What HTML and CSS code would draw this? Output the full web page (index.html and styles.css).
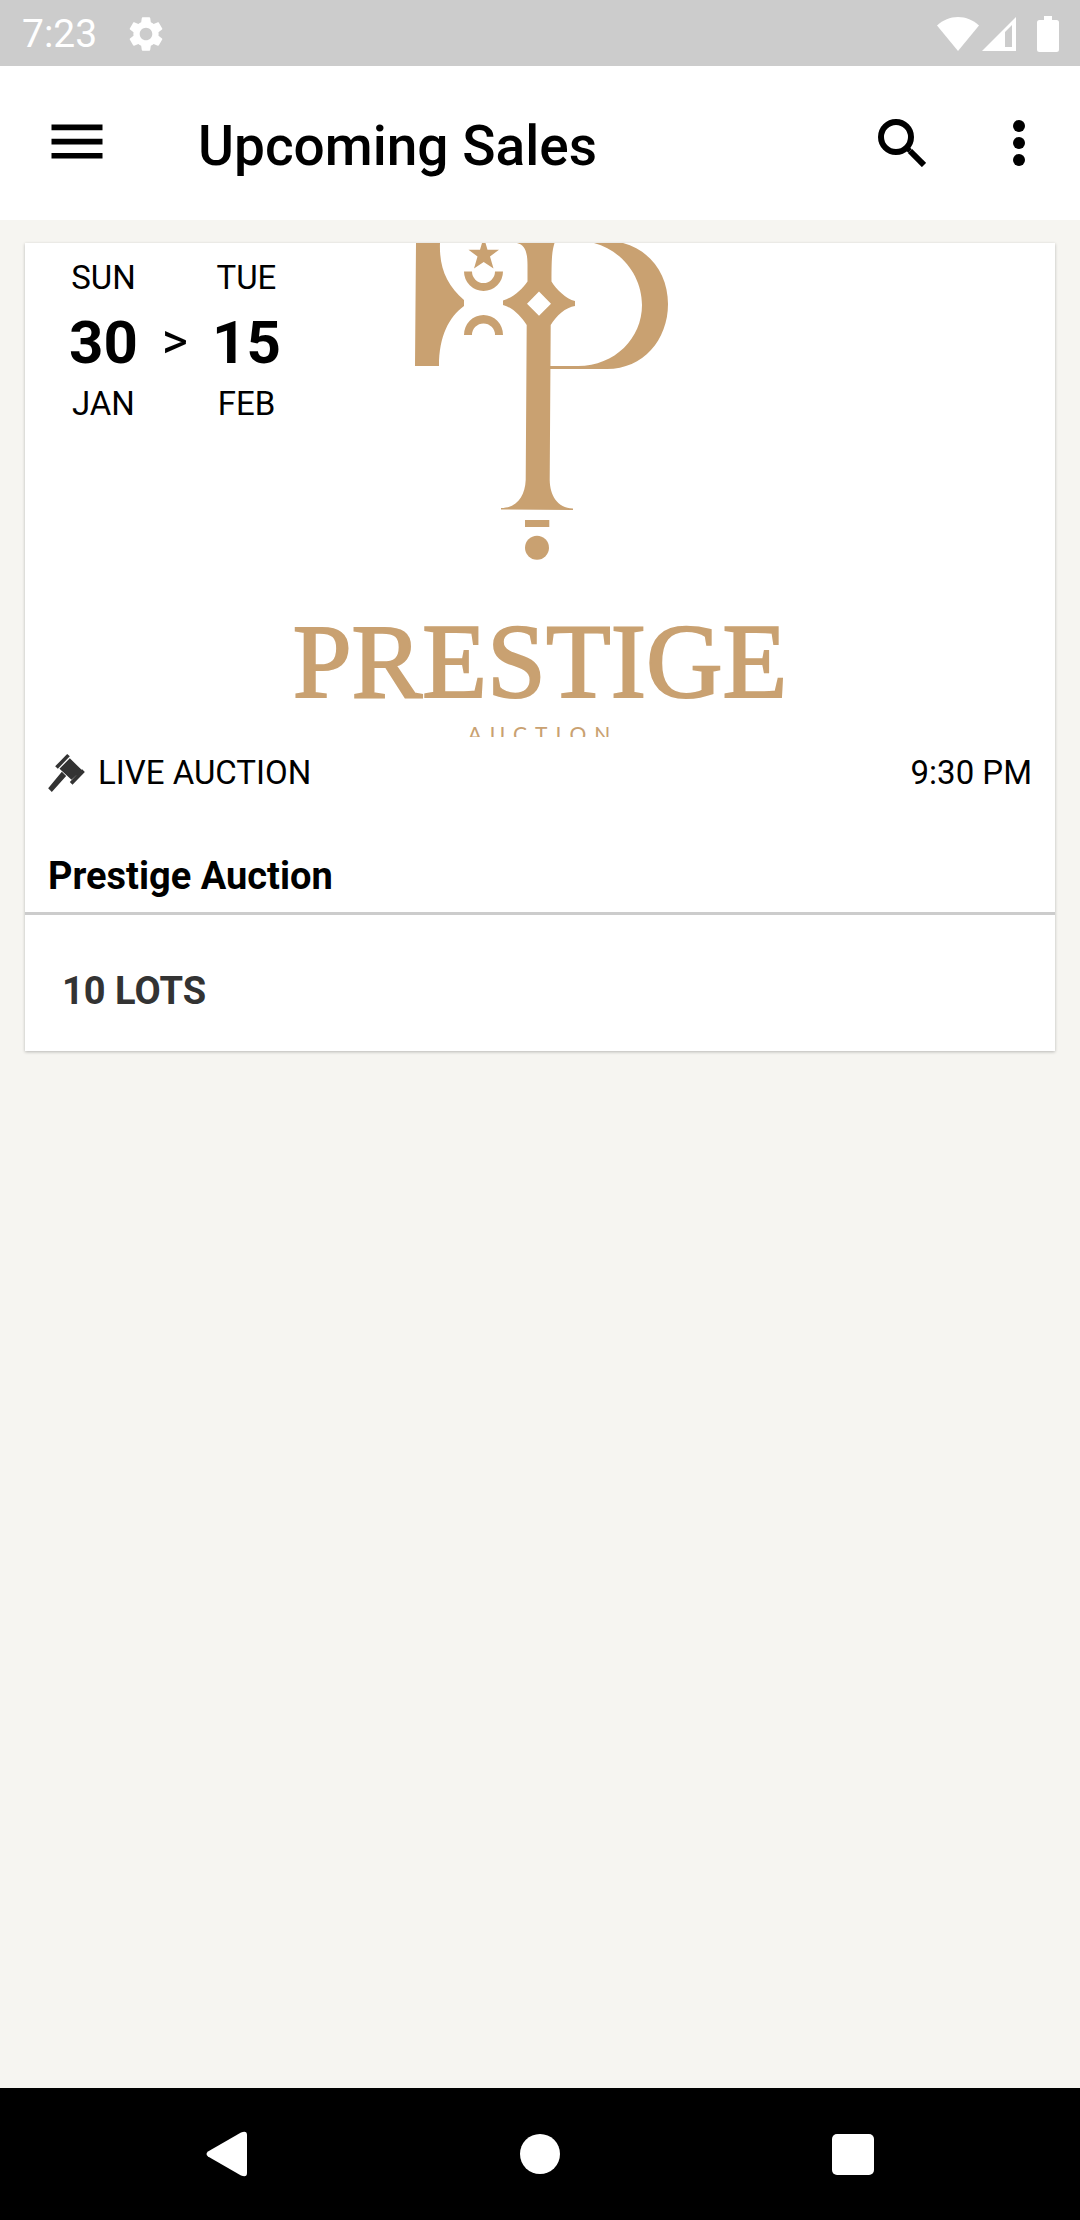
FILE: index.html
```html
<!DOCTYPE html>
<html lang="en">
<head>
  <meta charset="UTF-8">
  <meta name="viewport" content="width=device-width, initial-scale=1">
  <title>Upcoming Sales</title>
  <link rel="stylesheet" href="styles.css">
</head>
<body>
<div class="status-bar">
  <span class="clock">7:23</span>
  <svg class="gear" viewBox="0 0 24 24" aria-hidden="true">
    <path d="M19.14 12.94c.04-.3.06-.61.06-.94 0-.32-.02-.64-.07-.94l2.03-1.58c.18-.14.23-.41.12-.61l-1.92-3.32c-.12-.22-.37-.29-.59-.22l-2.39.96c-.5-.38-1.03-.7-1.62-.94l-.36-2.54c-.04-.24-.24-.41-.48-.41h-3.84c-.24 0-.43.17-.47.41l-.36 2.54c-.59.24-1.13.57-1.62.94l-2.39-.96c-.22-.08-.47 0-.59.22L2.74 8.87c-.12.21-.08.47.12.61l2.03 1.58c-.05.3-.09.63-.09.94s.02.64.07.94l-2.03 1.58c-.18.14-.23.41-.12.61l1.92 3.32c.12.22.37.29.59.22l2.39-.96c.5.38 1.03.7 1.62.94l.36 2.54c.05.24.24.41.48.41h3.84c.24 0 .44-.17.47-.41l.36-2.54c.59-.24 1.13-.56 1.62-.94l2.39.96c.22.08.47 0 .59-.22l1.92-3.32c.12-.22.07-.47-.12-.61l-2.01-1.58zM12 15.6c-1.98 0-3.6-1.62-3.6-3.6s1.62-3.6 3.6-3.6 3.6 1.62 3.6 3.6-1.62 3.6-3.6 3.6z"/>
  </svg>
  <div class="indicators">
    <svg class="wifi" viewBox="0 0 42 36" aria-hidden="true"><path d="M21 35 0 9.500C6 4 13 1 21 1s15 3 21 8.500z"/></svg>
    <svg class="signal" viewBox="0 0 36 36" aria-hidden="true"><path fill-rule="evenodd" d="M35 1v34H1zM24 16v15h7V9z"/></svg>
    <svg class="battery" viewBox="0 0 22 36" aria-hidden="true"><path d="M7 0h8v4h4.500Q22 4 22 6.500v27Q22 36 19.500 36h-17Q0 36 0 33.500v-27Q0 4 2.500 4H7z"/></svg>
  </div>
</div>

<header class="app-bar">
  <button class="icon-button" type="button" aria-label="Menu">
    <svg class="menu-icon" viewBox="0 0 24 24"><path d="M3 17.500h18v-2H3v2zm0-5h18v-2H3v2zm0-7v2h18v-2H3z"/></svg>
  </button>
  <h1 class="title">Upcoming Sales</h1>
  <button class="icon-button" type="button" aria-label="Search">
    <svg class="search-icon" viewBox="0 0 48 48" fill="none" stroke="#000" stroke-width="6">
      <circle cx="18" cy="18" r="15"/>
      <path d="M30 30l2 2" stroke-width="5"/>
      <path d="M32 32l14 14"/>
    </svg>
  </button>
  <button class="icon-button" type="button" aria-label="More options">
    <svg class="more-icon" viewBox="0 0 12 46"><circle cx="6" cy="6" r="6"/><circle cx="6" cy="23" r="6"/><circle cx="6" cy="40" r="6"/></svg>
  </button>
</header>

<main class="content">
  <article class="card">
    <div class="media">
      <svg class="logo" viewBox="0 0 1030 494" preserveAspectRatio="xMidYMid slice" role="img" aria-label="Prestige Auction">
        <path d="M391 0H415C414 25 422 42 439 57V63C424 74 414 93 414 123H390z"/>
        <path d="M457 0H460.500L462.500 6.700H474L465 13.500 468.500 25.500 458.700 19 449 25.500 452.500 13.500 443.500 6.700H455z"/>
        <path d="M439 28.500H447A11.500 11.500 0 0 0 470 28.500H478A19.500 19.500 0 0 1 439 28.500z"/>
        <path d="M439 92H447A11.500 11.500 0 0 1 470 92H478A19.500 20 0 0 0 439 92z"/>
        <path fill-rule="evenodd" d="M492 0H529.500C527 8 526.500 15 526.500 38.500 531 46 541 56 550 58V63C541 64 531 73 525.700 82L524.700 237C525 252 532 265 548 265.500V267L476 266.500V265C492 265 500 253 500.700 237L501.700 82C496 73 487 64 478 62V57.500C487 55 497 47 502.500 38.500V22C502.500 9 500 2 492 0zM514 48.500 502 60.700 514 72.700 526 60.700z"/>
        <path d="M569 0H598C627 8 643 33 643 61C643 97 618 126 582 126H525V123H553C590 123 617 95 617 62C617 34 598 8 569 0z"/>
        <path d="M500 277H524.300V284H500z"/>
        <circle cx="512" cy="304.700" r="12"/>
        <text class="logo-name" x="515" y="454">PRESTIGE</text>
        <text class="logo-sub" x="518" y="499">AUCTION</text>
      </svg>
      <div class="dates">
        <div class="date">
          <span>SUN</span>
          <strong>30</strong>
          <span>JAN</span>
        </div>
        <span class="arrow">&gt;</span>
        <div class="date">
          <span>TUE</span>
          <strong>15</strong>
          <span>FEB</span>
        </div>
      </div>
    </div>
    <div class="details">
      <div class="meta">
        <svg class="gavel" viewBox="0 0 110 114" aria-hidden="true">
          <path d="M57 0l8 7-36 37-8-7zM65 13l36 35-31 29-36-33zM102 46l8 8-37 38-8-8zM41 53l13 13-43 48-11-11z"/>
        </svg>
        <span>LIVE AUCTION</span>
        <time class="time">9:30 PM</time>
      </div>
      <h2 class="name">Prestige Auction</h2>
    </div>
    <p class="lots">10 LOTS</p>
  </article>
</main>

<nav class="nav-bar">
  <button type="button" aria-label="Back"><svg viewBox="0 0 46 46"><path d="M4 20.500 37 1.500Q43 -1 43 4V42Q43 47 37 44.500L4 25.500Q1 23 4 20.500z"/></svg></button>
  <button type="button" aria-label="Home"><svg viewBox="0 0 46 46"><circle cx="23" cy="23" r="20"/></svg></button>
  <button type="button" aria-label="Recent apps"><svg viewBox="0 0 46 46"><rect x="2" y="3" width="42" height="41" rx="5"/></svg></button>
</nav>
</body>
</html>
```

FILE: styles.css
```css
* { box-sizing: border-box; }
body { margin: 0; min-height: 100vh; display: flex; flex-direction: column; background: #f6f5f1; color: #000; font-family: Roboto, "Liberation Sans", sans-serif; font-size: 33px; line-height: 40px; }
h1, h2, p { margin: 0; }
button { padding: 0; border: none; background: none; cursor: pointer; }
svg { display: block; }

/* status bar */
.status-bar { display: flex; align-items: center; height: 66px; padding: 2px 21px 0 22px; background: #ccc; color: #fff; fill: #fff; }
.clock { font-size: 39px; }
.gear { width: 42px; height: 42px; margin-left: 28px; }
.indicators { display: flex; align-items: center; margin-left: auto; }
.wifi { width: 42px; height: 36px; }
.signal { width: 36px; height: 36px; margin-left: 2px; }
.battery { width: 22px; height: 36px; margin-left: 20px; }

/* app bar */
.app-bar { display: flex; align-items: center; height: 154px; padding: 0 55px 0 43px; background: #fff; }
.title { flex: 1; margin-left: 87px; font-size: 55px; font-weight: 500; line-height: 64px; padding-top: 6px; }
.icon-button + .icon-button { margin-left: 87px; }
.menu-icon { width: 68px; height: 68px; }
.search-icon { width: 48px; height: 48px; }
.more-icon { width: 12px; height: 46px; }

/* sale card */
.content { flex: 1; padding: 23px 25px; }
.card { background: #fff; box-shadow: 0 1px 3px rgba(0, 0, 0, 0.25); }
.media { position: relative; }
.logo { width: 100%; height: auto; fill: #c9a171; overflow: hidden; }
.logo-name { font-family: "Liberation Serif", serif; font-size: 106px; text-anchor: middle; stroke: #c9a171; stroke-width: 2px; }
.logo-sub { font-family: Lato, sans-serif; font-size: 21px; letter-spacing: 8px; text-anchor: middle; }
.dates { position: absolute; top: 15px; left: 44px; display: flex; align-items: center; gap: 24px; }
.date { display: flex; flex-direction: column; align-items: center; }
.date strong { padding-top: 4px; font-size: 60px; line-height: 82px; }
.arrow { font-size: 50px; }
.details { padding: 16px 23px 12px; border-bottom: 3px solid #ccc; }
.meta { display: flex; align-items: center; }
.gavel { width: 37px; height: 38px; margin-right: 13px; fill: #333; }
.time { margin-left: auto; }
.name { margin-top: 59px; font-size: 38px; font-weight: 700; line-height: 48px; }
.lots { padding: 52px 37px 36px; color: #333; font-size: 38px; font-weight: 700; line-height: 48px; }

/* system navigation */
.nav-bar { display: grid; grid-template-columns: repeat(3, 1fr); height: 132px; padding: 0 70px; background: #000; }
.nav-bar button { display: flex; align-items: center; justify-content: center; }
.nav-bar svg { width: 46px; height: 46px; fill: #fff; }
```
